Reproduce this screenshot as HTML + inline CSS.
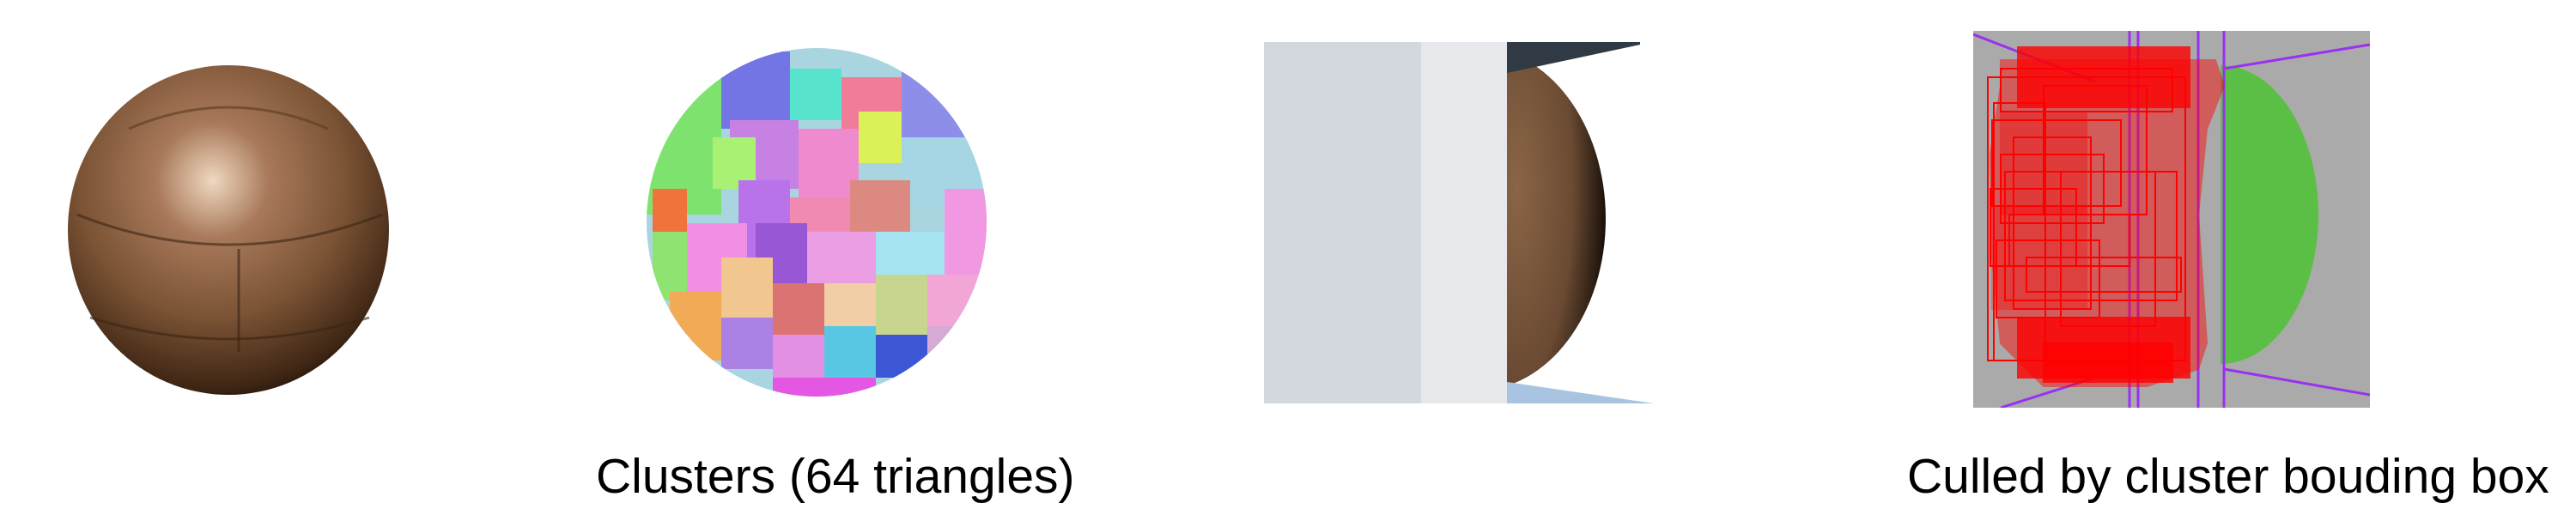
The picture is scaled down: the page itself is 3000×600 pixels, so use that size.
<!DOCTYPE html>
<html><head><meta charset="utf-8"><style>
html,body{margin:0;padding:0;background:#fff;width:3000px;height:600px;overflow:hidden}
.t{position:absolute;font-family:"Liberation Sans",Arial,sans-serif;font-size:57px;color:#000;white-space:nowrap;line-height:1}
</style></head><body>
<svg width="3000" height="600" style="position:absolute;left:0;top:0">
<defs>
<radialGradient id="br" cx="0.45" cy="0.35" r="0.7">
<stop offset="0" stop-color="#f0d8c0"/><stop offset="0.25" stop-color="#a8795a"/><stop offset="0.6" stop-color="#7a5234"/><stop offset="0.9" stop-color="#3e2614"/><stop offset="1" stop-color="#160d06"/></radialGradient>
<radialGradient id="br2" cx="0.1" cy="0.4" r="0.9">
<stop offset="0" stop-color="#8a6547"/><stop offset="0.6" stop-color="#6a4a32"/><stop offset="1" stop-color="#100a06"/></radialGradient>
<clipPath id="c2"><ellipse cx="951" cy="259" rx="198" ry="203"/></clipPath>
<clipPath id="c3"><ellipse cx="1720" cy="255" rx="150" ry="200"/></clipPath>
<clipPath id="c4"><rect x="2298" y="36" width="462" height="439"/></clipPath>
</defs>
<ellipse cx="266" cy="268" rx="187" ry="192" fill="url(#br)"/>
<path d="M150 150 Q266 100 382 150" stroke="#5a3a22" stroke-width="3" fill="none" opacity=".6"/>
<path d="M90 250 Q266 320 445 250" stroke="#3a2414" stroke-width="3" fill="none" opacity=".6"/>
<path d="M105 370 Q266 420 430 370" stroke="#3a2414" stroke-width="3" fill="none" opacity=".6"/>
<line x1="278" y1="290" x2="278" y2="410" stroke="#3a2414" stroke-width="3" opacity=".6"/>
<g clip-path="url(#c2)">
<rect x="750" y="50" width="410" height="420" fill="#9ed0dc"/>
<rect x="750" y="50" width="90" height="200" fill="#6de05a"/>
<rect x="840" y="60" width="80" height="90" fill="#5f62e0"/>
<rect x="920" y="80" width="60" height="60" fill="#40e0c8"/>
<rect x="980" y="90" width="70" height="90" fill="#f06a8a"/>
<rect x="1050" y="60" width="110" height="110" fill="#7e7ee8"/>
<rect x="1000" y="130" width="50" height="60" fill="#d8f040"/>
<rect x="850" y="140" width="80" height="80" fill="#c070e0"/>
<rect x="930" y="150" width="70" height="80" fill="#ee7ac8"/>
<rect x="830" y="160" width="50" height="60" fill="#9ef060"/>
<rect x="1050" y="160" width="100" height="80" fill="#9ad0e0"/>
<rect x="860" y="210" width="60" height="100" fill="#b060e8"/>
<rect x="920" y="230" width="70" height="60" fill="#f07aa8"/>
<rect x="990" y="210" width="70" height="60" fill="#d87a70"/>
<rect x="1100" y="220" width="60" height="100" fill="#f08ae0"/>
<rect x="760" y="220" width="40" height="50" fill="#f06020"/>
<rect x="760" y="270" width="50" height="80" fill="#80e060"/>
<rect x="800" y="260" width="70" height="90" fill="#ee80e0"/>
<rect x="880" y="260" width="60" height="80" fill="#8a40d0"/>
<rect x="940" y="270" width="80" height="60" fill="#e890e0"/>
<rect x="1020" y="270" width="80" height="50" fill="#9ae0f0"/>
<rect x="840" y="300" width="60" height="70" fill="#f0c080"/>
<rect x="900" y="330" width="60" height="60" fill="#d86060"/>
<rect x="960" y="330" width="60" height="50" fill="#f0c89a"/>
<rect x="1020" y="320" width="60" height="70" fill="#c0d080"/>
<rect x="1080" y="320" width="70" height="70" fill="#f09ad0"/>
<rect x="780" y="340" width="60" height="80" fill="#f0a040"/>
<rect x="840" y="370" width="60" height="60" fill="#a070e0"/>
<rect x="900" y="390" width="60" height="60" fill="#e080e0"/>
<rect x="960" y="380" width="60" height="60" fill="#40c0e0"/>
<rect x="1020" y="390" width="60" height="50" fill="#2040d0"/>
<rect x="1080" y="380" width="60" height="60" fill="#d0a0d0"/>
<rect x="900" y="440" width="120" height="30" fill="#e040e0"/>
<rect x="750" y="50" width="410" height="420" fill="#fff" opacity=".12"/>
</g>
<rect x="1472" y="49" width="183" height="421" fill="#d3d8df"/>
<rect x="1655" y="49" width="100" height="421" fill="#e6e8eb"/>
<g clip-path="url(#c3)"><rect x="1755" y="49" width="120" height="421" fill="url(#br2)"/></g>
<polygon points="1755,49 1910,49 1910,52 1755,85" fill="#2f3a44"/>
<polygon points="1755,445 1926,470 1755,470" fill="#a8c4e0"/>
<rect x="2298" y="36" width="462" height="439" fill="#aaaaaa"/>
<ellipse cx="2586" cy="250" rx="114" ry="174" fill="#5cbf45"/>
<rect x="2300" y="60" width="286" height="400" fill="#aaaaaa"/>
<g clip-path="url(#c4)" stroke="#9a30f0" stroke-width="3" fill="none">
<line x1="2298" y1="40" x2="2440" y2="95"/><line x1="2590" y1="80" x2="2760" y2="52"/>
<line x1="2590" y1="430" x2="2760" y2="460"/><line x1="2440" y1="440" x2="2330" y2="475"/>
<line x1="2480" y1="36" x2="2480" y2="475"/><line x1="2490" y1="36" x2="2490" y2="475"/><line x1="2560" y1="36" x2="2560" y2="475"/><line x1="2590" y1="36" x2="2590" y2="475"/>
</g>
<g stroke="#ff0000" stroke-width="2" fill="none">
<path d="M2330 70 L2580 70 L2590 100 L2570 150 L2560 250 L2570 400 L2560 430 L2500 450 L2380 450 L2330 400 L2320 300 L2318 180 L2330 100 Z" fill="#ff0000" opacity=".45"/>
<rect x="2315" y="90" width="230" height="330"/><rect x="2330" y="80" width="200" height="50"/><rect x="2350" y="55" width="200" height="70" fill="#ff0000" opacity=".8"/>
<rect x="2320" y="140" width="150" height="100"/><rect x="2330" y="180" width="120" height="80"/><rect x="2318" y="220" width="100" height="90"/>
<rect x="2340" y="250" width="140" height="60"/><rect x="2325" y="280" width="120" height="90"/><rect x="2360" y="300" width="180" height="40"/>
<rect x="2350" y="370" width="200" height="70" fill="#ff0000" opacity=".8"/><rect x="2380" y="400" width="150" height="45" fill="#ff0000" opacity=".8"/>
<rect x="2330" y="130" width="100" height="120" fill="#ff0000" opacity=".35"/><rect x="2320" y="240" width="110" height="120" fill="#ff0000" opacity=".3"/>
<rect x="2345" y="160" width="90" height="200"/><rect x="2380" y="100" width="120" height="150"/><rect x="2400" y="200" width="110" height="180"/>
<rect x="2322" y="120" width="60" height="300"/><rect x="2335" y="200" width="200" height="150"/>
</g>
</svg>
<div class="t" style="left:694px;top:527px">Clusters (64 triangles)</div>
<div class="t" style="left:2221px;top:527px">Culled by cluster bouding box</div>
</body></html>
